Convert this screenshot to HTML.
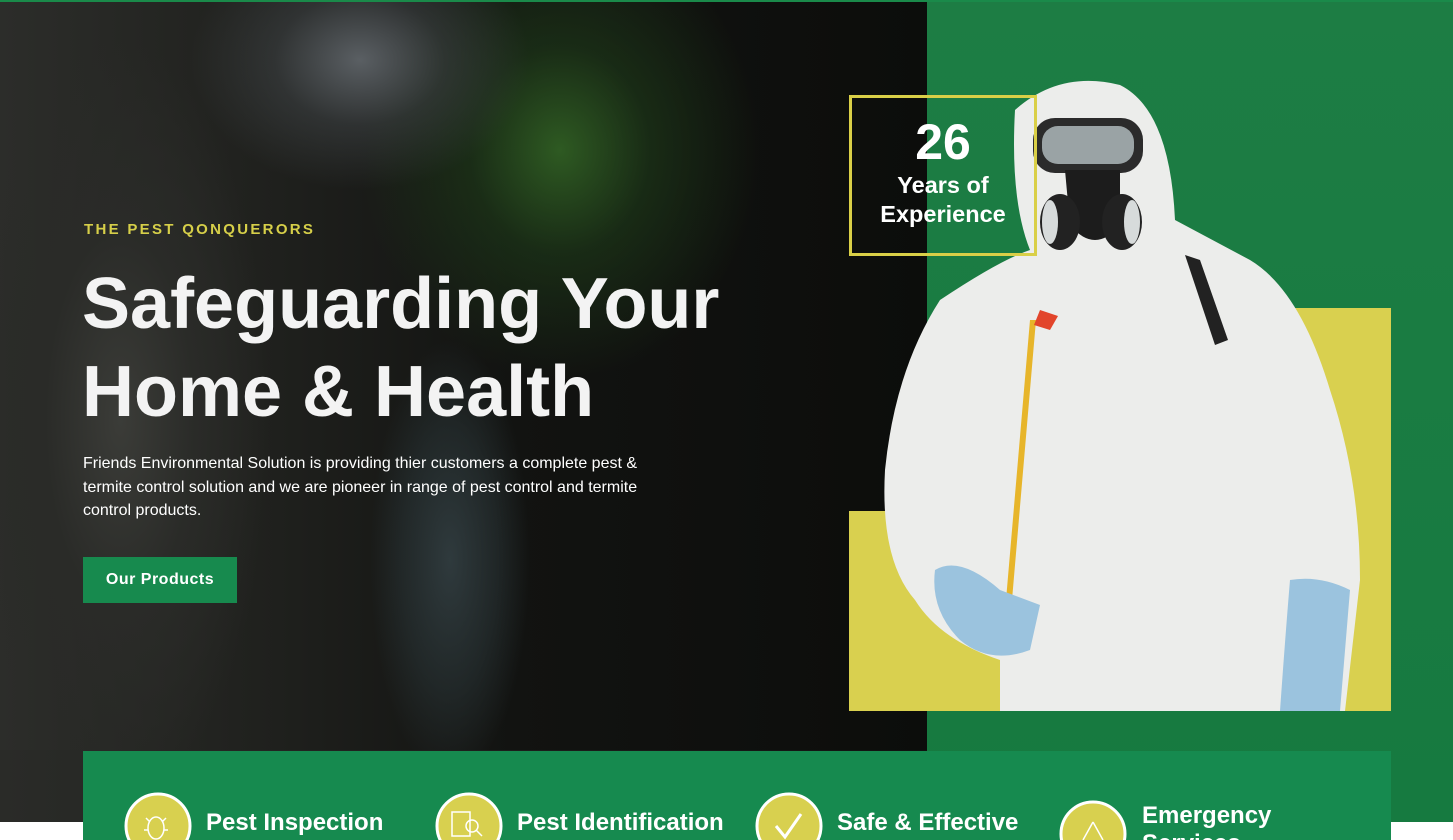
<!DOCTYPE html>
<html><head><style>
*{margin:0;padding:0;box-sizing:border-box}
body{width:1453px;height:840px;overflow:hidden;position:relative;background:#fff;font-family:"Liberation Sans",Arial,sans-serif}
.abs{position:absolute}
</style></head><body>
<div class="abs" style="left:0;top:0;width:1453px;height:822px;background:#0e0f0d"></div>
<div class="abs" style="left:0;top:0;width:927px;height:750px;background:
radial-gradient(ellipse 170px 130px at 360px 60px,#5a5f63 0%,rgba(60,64,66,.6) 50%,transparent 100%),
radial-gradient(ellipse 200px 230px at 560px 150px,#2e5a22 0%,rgba(30,60,25,.6) 45%,transparent 100%),
radial-gradient(ellipse 150px 380px at 120px 420px,#3b3c38 0%,#2a2b28 50%,transparent 100%),
radial-gradient(ellipse 80px 220px at 450px 560px,#2f3a3d 0%,rgba(40,50,52,.6) 60%,transparent 100%),
linear-gradient(90deg,#2c2d2a 0%,#1f201d 30%,#121311 55%,#0c0d0b 100%)"></div>
<div class="abs" style="left:0;top:750px;width:927px;height:72px;background:linear-gradient(90deg,#2a2b28,#101110)"></div>
<div class="abs" style="left:927px;top:0;width:526px;height:822px;background:
radial-gradient(ellipse 200px 260px at 1280px 300px,#2a9a6a 0%,transparent 100%),
radial-gradient(ellipse 150px 140px at 1370px 60px,#38a27a 0%,transparent 100%),
linear-gradient(180deg,#1d7d44,#167a40)"></div>
<div class="abs" style="left:0;top:0;width:1453px;height:2px;background:#1a8a4a"></div>
<div class="abs" style="left:849px;top:511px;width:542px;height:200px;background:#d9d04f"></div>
<div class="abs" style="left:1250px;top:308px;width:141px;height:403px;background:#d9d04f"></div>
<svg class="abs" style="left:880px;top:75px" width="490" height="640" viewBox="880 75 490 640">
<path d="M1015 110 Q1060 70 1120 85 Q1170 110 1175 220 L1250 260 Q1300 290 1330 390 Q1360 480 1360 580 L1345 711 L1000 711 L1000 660 Q940 640 915 600 Q880 560 885 470 Q895 370 940 300 Q1000 260 1030 250 Q1010 200 1015 110 Z" fill="#ecedeb"/>
<path d="M1185 255 L1200 260 L1228 340 L1215 345 Z" fill="#222"/>
<rect x="1033" y="118" width="110" height="55" rx="22" fill="#2b2b2b"/>
<rect x="1042" y="126" width="92" height="38" rx="16" fill="#9aa3a5"/>
<path d="M1065 170 L1120 170 L1120 225 Q1095 255 1070 225 Z" fill="#1c1c1c"/>
<ellipse cx="1060" cy="222" rx="20" ry="28" fill="#222"/>
<ellipse cx="1122" cy="222" rx="20" ry="28" fill="#222"/>
<ellipse cx="1050" cy="222" rx="8" ry="22" fill="#d7dbdb"/>
<ellipse cx="1132" cy="222" rx="8" ry="22" fill="#d7dbdb"/>
<path d="M1030 320 L1036 320 L1012 600 L1006 600 Z" fill="#e7b52a"/>
<path d="M1040 310 L1058 316 L1050 330 L1034 325 Z" fill="#e2452b"/>
<path d="M935 570 Q960 555 1000 590 L1040 605 L1030 650 Q990 665 960 640 Q930 610 935 570 Z" fill="#9bc3de"/>
<path d="M1290 580 Q1320 575 1350 590 L1340 711 L1280 711 Q1285 640 1290 580 Z" fill="#9bc3de"/>
</svg>
<div class="abs" style="left:849px;top:95px;width:188px;height:161px;border:3px solid #d9cf47;color:#fff;text-align:center">
<div style="font-size:50px;font-weight:bold;margin-top:17px;line-height:54px">26</div>
<div style="font-size:23.5px;font-weight:bold;line-height:29px;margin-top:2px;margin-left:-8px;margin-right:-8px">Years of<br>Experience</div>
</div>
<div class="abs" style="left:84px;top:221px;color:#d6cf49;font-size:15px;font-weight:bold;letter-spacing:2.3px">THE PEST QONQUERORS</div>
<div class="abs" style="left:82px;top:260px;color:#f3f3f3;font-size:72px;font-weight:bold;line-height:88px;white-space:nowrap">Safeguarding Your<br>Home &amp; Health</div>
<div class="abs" style="left:83px;top:452px;width:580px;color:#fff;font-size:16px;line-height:23.5px">Friends Environmental Solution is providing thier customers a complete pest &amp; termite control solution and we are pioneer in range of pest control and termite control products.</div>
<div class="abs" style="left:83px;top:557px;width:154px;height:46px;background:#178a4e;color:#fff;font-size:16px;font-weight:bold;letter-spacing:.5px;text-align:center;line-height:45px">Our Products</div>
<div class="abs" style="left:83px;top:751px;width:1308px;height:89px;background:#168a4f"></div>
<svg class="abs" style="left:0;top:0" width="1453" height="840">
<g fill="#d8d04f" stroke="#fff" stroke-width="3">
<circle cx="158" cy="826" r="32"/><circle cx="469" cy="826" r="32"/><circle cx="789" cy="826" r="32"/><circle cx="1093" cy="834" r="32"/>
</g>
<g fill="none" stroke="#fff" stroke-width="1.5">
<ellipse cx="156" cy="828" rx="8" ry="11"/><path d="M146 818 L150 822 M166 818 L162 822 M144 830 L148 830 M168 830 L164 830"/>
<rect x="452" y="812" width="18" height="24"/><circle cx="472" cy="826" r="6"/><path d="M476 830 L482 836"/>
<path d="M776 826 L785 837 L801 814" stroke-width="3"/>
<path d="M1093 822 L1083 840 M1093 822 L1103 840"/>
</g>
<g fill="#fff" font-family="Liberation Sans,Arial,sans-serif" font-weight="bold" font-size="24">
<text x="206" y="830">Pest Inspection</text>
<text x="517" y="830">Pest Identification</text>
<text x="837" y="830">Safe &amp; Effective</text>
<text x="1142" y="823">Emergency</text>
<text x="1142" y="851">Services</text>
</g>
</svg>
</body></html>
